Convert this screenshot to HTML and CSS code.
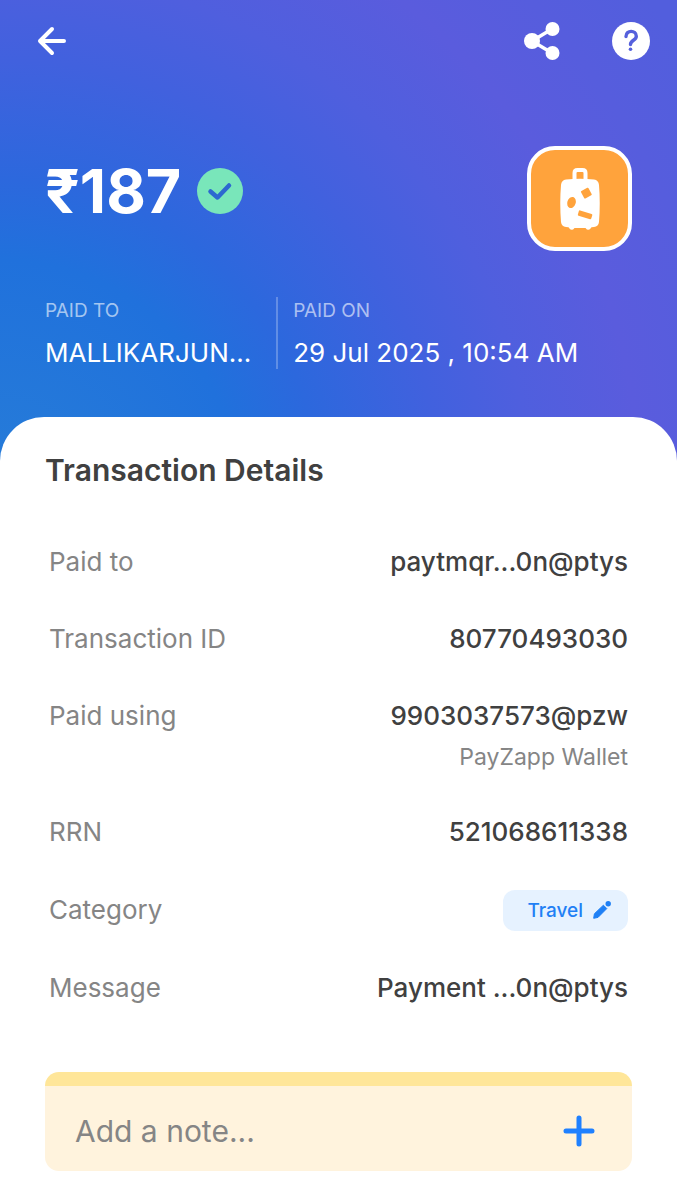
FILE: index.html
```
<!DOCTYPE html>
<html lang="en">
<head>
    <meta charset="UTF-8">
    <meta name="viewport" content="width=device-width, initial-scale=1.0">
    <title>Transaction Details</title>
    <link rel="stylesheet" href="styles.css">
</head>
<body>

    <header class="hero">
        <nav class="topbar">
            <button type="button" class="icon-btn" aria-label="Back">
                <svg width="30" height="30" viewBox="0 0 30 30" fill="none" stroke="#fff" stroke-width="4" stroke-linecap="round" stroke-linejoin="round">
                    <path d="M15 3 L3 15 L15 27 M3 15 H27"/>
                </svg>
            </button>
            <div class="topbar-actions">
                <button type="button" class="icon-btn" aria-label="Share">
                    <svg width="36" height="38" viewBox="0 0 36 38" fill="#fff">
                        <path d="M28 7 L8 19 L28 31" fill="none" stroke="#fff" stroke-width="3.5"/>
                        <circle cx="8" cy="19" r="8"/>
                        <circle cx="28.5" cy="7" r="7"/>
                        <circle cx="28.5" cy="31" r="7"/>
                    </svg>
                </button>
                <button type="button" class="icon-btn" aria-label="Help">
                    <svg width="38" height="38" viewBox="0 0 38 38">
                        <circle cx="19" cy="19" r="19" fill="#fff"/>
                        <path d="M14 14.5 C14 7.5 24.3 8 24.3 14.2 C24.3 18.5 18.5 18 18.5 22.5" fill="none" stroke="#5560dc" stroke-width="3.4" stroke-linecap="round"/>
                        <circle cx="18.5" cy="27.3" r="1.8" fill="#5560dc"/>
                    </svg>
                </button>
            </div>
        </nav>

        <div class="summary">
            <div class="amount">
                <h1>₹187</h1>
                <svg width="46" height="46" viewBox="0 0 46 46" role="img" aria-label="Successful">
                    <circle cx="23" cy="23" r="23" fill="#79e6ba"/>
                    <path d="M13.5 23.5 L20.5 29.5 L32 17.5" fill="none" stroke="#2c68d0" stroke-width="4.5" stroke-linecap="round" stroke-linejoin="round"/>
                </svg>
            </div>
            <div class="category-tile">
                <svg width="40" height="64" viewBox="0 0 40 64">
                    <path d="M14.5 13 V6 Q14.5 3 17.5 3 H22.5 Q25.5 3 25.5 6 V13" fill="none" stroke="#fff" stroke-width="4"/>
                    <path d="M6 12.5 Q20 11 34 12.5 Q38.5 13 39 18 Q40.5 36 39 55 Q38.5 59.5 34 60 L31.5 60.3 Q28.5 65 25.5 61 H14.5 Q11.5 65 8.5 60.3 L6 60 Q1.5 59.5 1 55 Q-0.5 36 1 18 Q1.5 13 6 12.5 Z" fill="#fff"/>
                    <ellipse cx="11.5" cy="35.5" rx="4.2" ry="5.7" transform="rotate(18 11.5 35.5)" fill="#ffa33c"/>
                    <rect x="22" y="22" width="8.5" height="8.5" rx="1" transform="rotate(-28 26 26)" fill="#ffa33c"/>
                    <rect x="18" y="45" width="14" height="5.5" rx="1" transform="rotate(17 25 48)" fill="#ffa33c"/>
                </svg>
            </div>
        </div>

        <div class="meta">
            <div class="meta-item">
                <span class="meta-label">PAID TO</span>
                <span class="meta-value">MALLIKARJUN...</span>
            </div>
            <div class="meta-item">
                <span class="meta-label">PAID ON</span>
                <span class="meta-value">29 Jul 2025 , 10:54 AM</span>
            </div>
        </div>
    </header>

    <main class="sheet">
        <h2>Transaction Details</h2>

        <dl class="details">
            <div class="row">
                <dt>Paid to</dt>
                <dd>paytmqr...0n@ptys</dd>
            </div>
            <div class="row">
                <dt>Transaction ID</dt>
                <dd>80770493030</dd>
            </div>
            <div class="row">
                <dt>Paid using</dt>
                <dd>9903037573@pzw <span class="sub">PayZapp Wallet</span></dd>
            </div>
            <div class="row">
                <dt>RRN</dt>
                <dd>521068611338</dd>
            </div>
            <div class="row row-category">
                <dt>Category</dt>
                <dd>
                    <button type="button" class="tag">
                        Travel
                        <svg width="18" height="18" viewBox="0 0 18 18" fill="#1f80f5">
                            <path d="M0.7 17.3 L1.4 12.8 L10.4 4.2 L13.8 7.6 L5 16.4 Z" stroke="#1f80f5" stroke-linejoin="round"/>
                            <circle cx="15.2" cy="2.8" r="2.7"/>
                        </svg>
                    </button>
                </dd>
            </div>
            <div class="row">
                <dt>Message</dt>
                <dd>Payment ...0n@ptys</dd>
            </div>
        </dl>

        <form class="note">
            <input type="text" class="note-input" aria-label="Add a note" placeholder="Add a note...">
            <button type="button" class="icon-btn" aria-label="Save note">
                <svg width="32" height="32" viewBox="0 0 32 32" fill="none" stroke="#1f80ff" stroke-width="5" stroke-linecap="round">
                    <path d="M16 3 V29 M3 16 H29"/>
                </svg>
            </button>
        </form>
    </main>

</body>
</html>
```
FILE: styles.css
```
* {
    box-sizing: border-box;
}
body {
    font-family: Inter, "Liberation Sans", sans-serif;
    margin: 0;
    background-color: white;
    color: #404040;
}
h1, h2, dl, dd {
    margin: 0;
}
button, input {
    font-family: inherit;
}
svg {
    display: block;
}
.icon-btn {
    padding: 0;
    background: none;
    border: none;
    cursor: pointer;
}
.hero {
    padding: 22px 45px 96px;
    background: radial-gradient(circle at 0 500px, #257ad9 60px, #2071dc 240px, #2c68dd 320px, #4161de 440px, #4f5fde 530px, #5a5cdd 640px, #525edd 820px);
    color: white;
}
.topbar {
    display: flex;
    justify-content: space-between;
    align-items: center;
    margin: 0 -18px 0 -8px;
}
.topbar-actions {
    display: flex;
    gap: 52px;
}
.summary {
    display: flex;
    justify-content: space-between;
    margin-top: 86px;
}
.amount {
    display: flex;
    align-items: center;
    gap: 16px;
    height: 90px;
}
.amount h1 {
    font-size: 61px;
    line-height: 72px;
    font-weight: 700;
}
.category-tile {
    display: flex;
    align-items: center;
    justify-content: center;
    width: 105px;
    height: 105px;
    background-color: #ffa33c;
    border: 4px solid white;
    border-radius: 28px;
}
.meta {
    display: flex;
    margin-top: 46px;
}
.meta-item {
    display: flex;
    flex-direction: column;
    gap: 12px;
    height: 72px;
}
.meta-item + .meta-item {
    margin-left: 25px;
    padding-left: 15px;
    border-left: 2px solid rgba(255, 255, 255, 0.25);
}
.meta-label {
    font-size: 19px;
    line-height: 28px;
    color: rgba(255, 255, 255, 0.6);
}
.meta-value {
    font-size: 26px;
    line-height: 32px;
}
.sheet {
    margin-top: -48px;
    padding: 35px 45px 29px;
    background-color: white;
    border-radius: 44px 44px 0 0;
}
.sheet h2 {
    font-size: 30px;
    line-height: 36px;
    font-weight: 600;
}
.details {
    display: flex;
    flex-direction: column;
    gap: 45px;
    margin-top: 58px;
    padding: 0 4px;
}
.row {
    display: flex;
    justify-content: space-between;
    font-size: 26px;
    line-height: 32px;
}
.row dt {
    color: #858585;
}
.row dd {
    font-weight: 500;
    text-align: right;
}
.row .sub {
    display: block;
    margin-top: 11px;
    font-size: 23px;
    font-weight: 400;
    line-height: 28px;
    color: #858585;
}
.row-category {
    align-items: center;
    height: 34px;
}
.tag {
    display: flex;
    align-items: center;
    gap: 10px;
    height: 41px;
    padding: 0 17px 0 24px;
    background-color: #e6f2ff;
    color: #1f80f5;
    font-size: 19px;
    font-weight: 500;
    border: none;
    border-radius: 12px;
    cursor: pointer;
}
.note {
    display: flex;
    align-items: center;
    height: 99px;
    margin-top: 68px;
    padding: 4px 37px 0 30px;
    background-color: #fff3dd;
    border-top: 14px solid #ffe699;
    border-radius: 14px;
}
.note-input {
    flex: 1;
    min-width: 0;
    padding: 0;
    background: none;
    border: none;
    font-size: 30px;
    line-height: 36px;
    color: #404040;
}
.note-input::placeholder {
    color: #858585;
}
```
